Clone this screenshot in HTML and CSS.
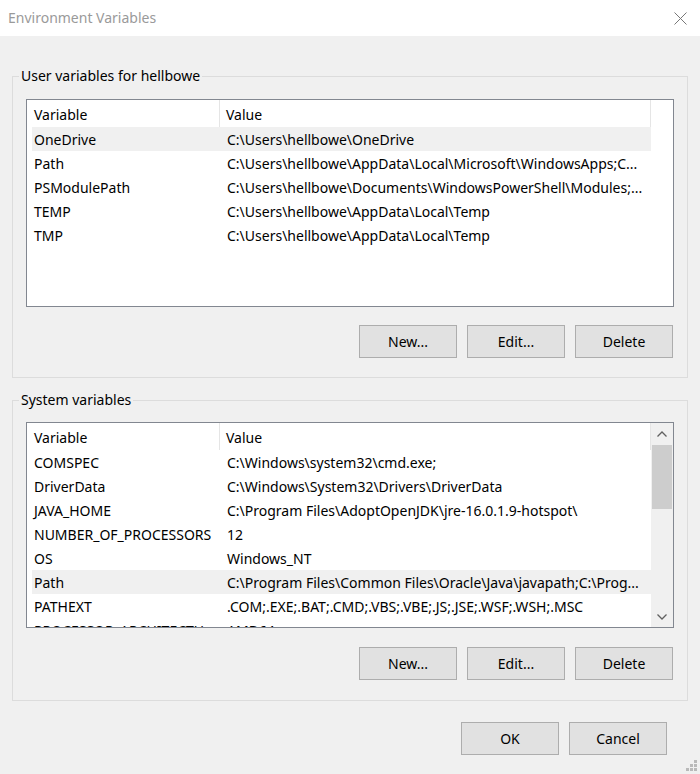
FILE: index.html
```html
<!DOCTYPE html>
<html>
<head>
<meta charset="utf-8">
<title>Environment Variables</title>
<link rel="stylesheet" href="styles.css">
</head>
<body>
<div class="window">
  <div class="titlebar">
    <span class="title">Environment Variables</span>
    <svg class="close" width="13" height="13" viewBox="0 0 13 13"><path d="M0.5 0.5 L12.5 12.5 M12.5 0.5 L0.5 12.5" stroke="#777" stroke-width="1" fill="none"/></svg>
  </div>
  <div class="content">
    <fieldset class="group group-user">
      <legend>User variables for hellbowe</legend>
      <div class="group-inner">
        <div class="list list-user">
          <div class="list-view">
            <div class="row header"><span class="c1">Variable</span><span class="c2">Value</span></div>
            <div class="row selected"><span class="c1">OneDrive</span><span class="c2">C:\Users\hellbowe\OneDrive</span></div>
            <div class="row"><span class="c1">Path</span><span class="c2">C:\Users\hellbowe\AppData\Local\Microsoft\WindowsApps;C...</span></div>
            <div class="row"><span class="c1">PSModulePath</span><span class="c2">C:\Users\hellbowe\Documents\WindowsPowerShell\Modules;...</span></div>
            <div class="row"><span class="c1">TEMP</span><span class="c2">C:\Users\hellbowe\AppData\Local\Temp</span></div>
            <div class="row"><span class="c1">TMP</span><span class="c2">C:\Users\hellbowe\AppData\Local\Temp</span></div>
          </div>
        </div>
        <div class="buttons">
          <button class="btn">New...</button>
          <button class="btn">Edit...</button>
          <button class="btn">Delete</button>
        </div>
      </div>
    </fieldset>

    <fieldset class="group group-system">
      <legend>System variables</legend>
      <div class="group-inner">
        <div class="list list-system">
          <div class="list-view">
            <div class="row header"><span class="c1">Variable</span><span class="c2">Value</span></div>
            <div class="row"><span class="c1">COMSPEC</span><span class="c2">C:\Windows\system32\cmd.exe;</span></div>
            <div class="row"><span class="c1">DriverData</span><span class="c2">C:\Windows\System32\Drivers\DriverData</span></div>
            <div class="row"><span class="c1">JAVA_HOME</span><span class="c2">C:\Program Files\AdoptOpenJDK\jre-16.0.1.9-hotspot\</span></div>
            <div class="row"><span class="c1">NUMBER_OF_PROCESSORS</span><span class="c2">12</span></div>
            <div class="row"><span class="c1">OS</span><span class="c2">Windows_NT</span></div>
            <div class="row selected"><span class="c1">Path</span><span class="c2">C:\Program Files\Common Files\Oracle\Java\javapath;C:\Prog...</span></div>
            <div class="row"><span class="c1">PATHEXT</span><span class="c2">.COM;.EXE;.BAT;.CMD;.VBS;.VBE;.JS;.JSE;.WSF;.WSH;.MSC</span></div>
            <div class="row"><span class="c1">PROCESSOR_ARCHITECTU...</span><span class="c2">AMD64</span></div>
          </div>
          <div class="scrollbar">
            <div class="sb-btn">
              <svg width="10" height="6" viewBox="0 0 10 6"><path d="M0.5 5.5 L5 1 L9.5 5.5" stroke="#606060" stroke-width="1.3" fill="none"/></svg>
            </div>
            <div class="sb-track"><div class="sb-thumb"></div></div>
            <div class="sb-btn">
              <svg width="10" height="6" viewBox="0 0 10 6"><path d="M0.5 0.5 L5 5 L9.5 0.5" stroke="#606060" stroke-width="1.3" fill="none"/></svg>
            </div>
          </div>
        </div>
        <div class="buttons">
          <button class="btn">New...</button>
          <button class="btn">Edit...</button>
          <button class="btn">Delete</button>
        </div>
      </div>
    </fieldset>

    <div class="footer">
      <button class="btn">OK</button>
      <button class="btn">Cancel</button>
    </div>
    <div class="grip-row">
      <svg class="grip" width="11" height="11" viewBox="0 0 11 11" fill="#b9b9b9">
        <rect x="8" y="0" width="3" height="3"/>
        <rect x="4" y="4" width="3" height="3"/>
        <rect x="8" y="4" width="3" height="3"/>
        <rect x="0" y="8" width="3" height="3"/>
        <rect x="4" y="8" width="3" height="3"/>
        <rect x="8" y="8" width="3" height="3"/>
      </svg>
    </div>
  </div>
</div>
</body>
</html>
```

FILE: styles.css
```css
html, body {
  margin: 0;
  padding: 0;
  background: #f0f0f0;
}

body {
  width: 700px;
  height: 774px;
  overflow: hidden;
  font-family: "Noto Sans", "Open Sans", "DejaVu Sans", sans-serif;
  font-size: 14px;
  color: #000;
}

.window {
  display: flex;
  flex-direction: column;
  height: 774px;
}

.titlebar {
  height: 36px;
  background: #fff;
  display: flex;
  align-items: center;
  justify-content: space-between;
  padding: 0 13px 0 8px;
  flex: none;
}

.title {
  color: #9a9a9a;
  font-size: 14px;
  line-height: 20px;
}

.close {
  display: block;
}

.content {
  padding: 0 12px;
  display: flex;
  flex-direction: column;
}

.group {
  margin: 30px 0 0;
  padding: 0;
  border: 1px solid #dcdcdc;
  min-width: 0;
}

.group legend {
  margin-left: 6px;
  padding: 0 2px;
  line-height: 20px;
  height: 20px;
}

.group-system {
  margin-top: 12px;
}

.group-inner {
  padding: 13px 13px 19px;
}

.group-system .group-inner {
  padding-top: 12px;
  padding-bottom: 20px;
}

.list {
  box-sizing: border-box;
  height: 208px;
  border: 1px solid #828790;
  background: #fff;
  display: flex;
  overflow: hidden;
}

.list-system {
  height: 206px;
}

.list-view {
  margin-left: 5px;
  width: 619px;
  flex: none;
  display: flex;
  flex-direction: column;
}

.row {
  display: grid;
  grid-template-columns: 188px 431px;
  height: 24px;
  line-height: 23px;
  flex: none;
  white-space: nowrap;
}

.row .c1 {
  padding-left: 2px;
  padding-top: 1px;
  overflow: hidden;
}

.row .c2 {
  padding-left: 7px;
  padding-top: 1px;
  overflow: hidden;
}

.row.header {
  height: 27px;
}

.row.header .c1 {
  border-right: 1px solid #e5e5e5;
  padding-top: 2px;
  line-height: 25px;
}

.row.header .c2 {
  border-right: 1px solid #e5e5e5;
  padding-top: 2px;
  line-height: 25px;
  padding-left: 6px;
}

.row.selected {
  background: #f0f0f0;
}

.scrollbar {
  width: 22px;
  background: #f0f0f0;
  display: flex;
  flex-direction: column;
  flex: none;
}

.sb-btn {
  height: 21px;
  display: flex;
  align-items: center;
  justify-content: center;
  flex: none;
}

.sb-track {
  flex: 1;
}

.sb-thumb {
  height: 64px;
  margin: 1px 1px 0;
  background: #cdcdcd;
}

.buttons {
  display: flex;
  justify-content: flex-end;
  gap: 10px;
  margin-top: 18px;
  padding-right: 1px;
}

.group-system .buttons {
  margin-top: 19px;
}

.btn {
  box-sizing: border-box;
  width: 98px;
  height: 33px;
  background: #e1e1e1;
  border: 1px solid #adadad;
  font-family: "Noto Sans", "Open Sans", "DejaVu Sans", sans-serif;
  font-size: 14px;
  color: #000;
  padding: 0;
  margin: 0;
  border-radius: 0;
}

.footer {
  display: flex;
  justify-content: flex-end;
  gap: 10px;
  margin-top: 21px;
  padding-right: 21px;
}

.grip-row {
  display: flex;
  justify-content: flex-end;
  margin-top: 5px;
  margin-right: -9px;
}

.grip {
  display: block;
}
```
